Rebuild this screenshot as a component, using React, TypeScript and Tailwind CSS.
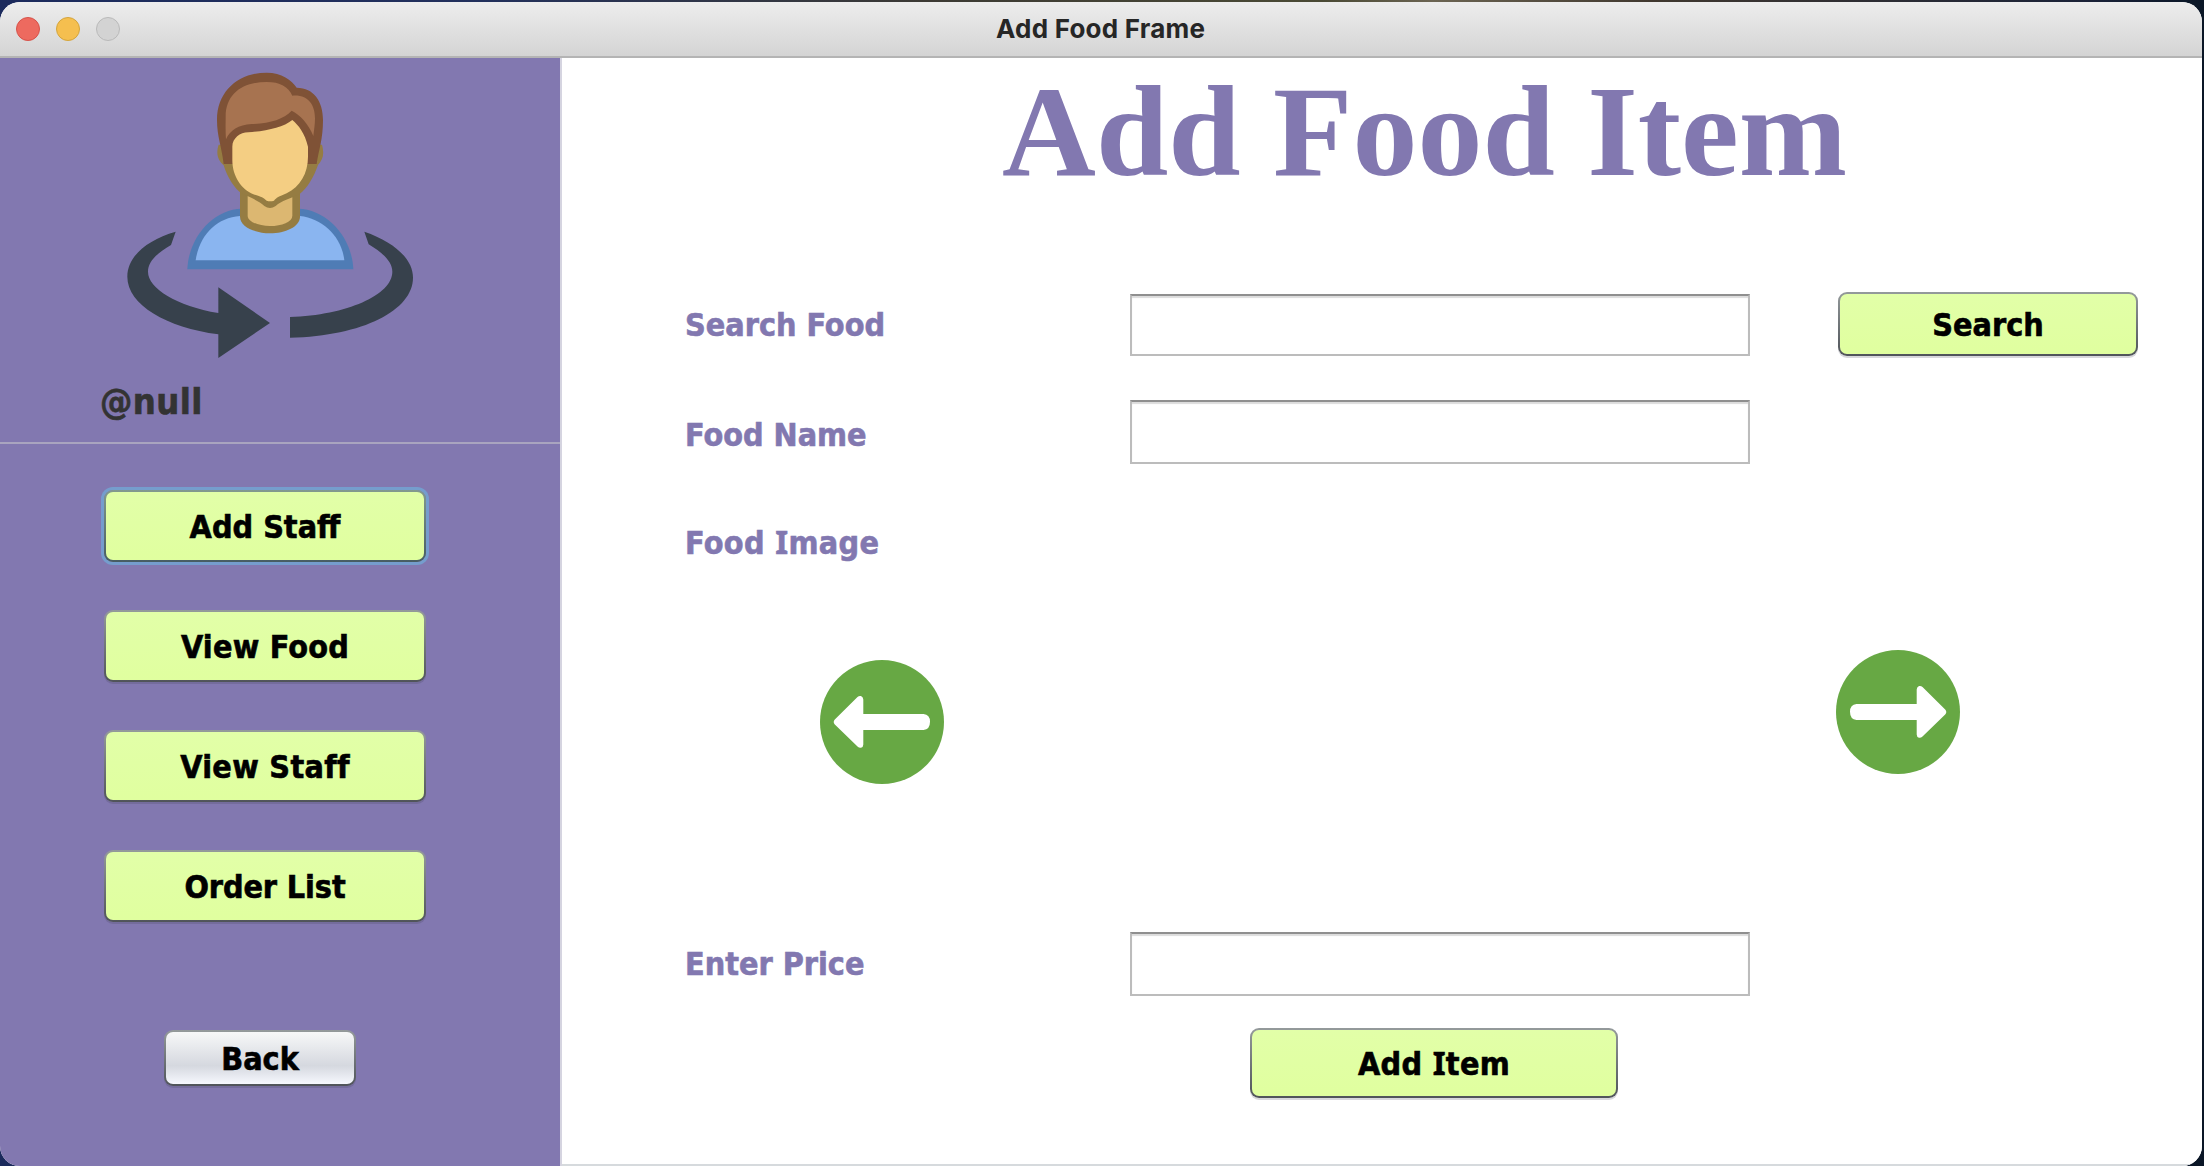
import React from 'react';
import clsx from 'clsx';

const tahoma = "font-['DejaVu_Sans_Condensed','DejaVu_Sans',sans-serif] font-bold [-webkit-text-stroke:0.6px_currentColor]";

function PersonIcon() {
  return (
    <svg viewBox="0 24 1020 966" className="ml-[100px] block h-[322px] w-[340px]" aria-hidden="true">
      <path fill="#37414c" d="M227 545C140 570 82 620 82 680C82 765 200 832 355 853V924L510 819L355 712V789C230 768 144 715 144 665C144 635 170 610 213 585Z" />
      <path fill="#37414c" d="M793 545C880 575 939 625 939 683C939 780 790 858 570 863V801C740 795 877 735 877 665C877 635 850 610 806 583Z" />
      <path fill="#4f7cb5" d="M262 658C266 560 340 478 425 476H595C680 478 756 560 760 658Z" />
      <path fill="#8ab5f0" d="M287 631C298 555 350 503 420 498H600C668 505 725 560 733 631Z" />
      <path fill="#957c42" d="M420 420V500C420 530 465 550 510 550C555 550 600 530 600 500V420Z" />
      <path fill="#dcb771" d="M443 436V497C443 515 475 528 510 528C545 528 577 515 577 497V436Z" />
      <path fill="#957c42" d="M356 284C346 315 356 332 371 346C382 382 402 415 428 433C455 443 480 455 493 468Q510 480 527 468C545 452 570 446 598 433C622 415 642 380 654 345C668 328 674 315 666 284Z" />
      <path fill="#7f5236" d="M371 342C365 290 351 260 351 210C351 120 420 68 500 68C545 68 575 90 590 113C642 113 669 155 669 210C669 270 656 300 650 342Z" />
      <path fill="#a77350" d="M378 268C376 240 377 215 377 200C377 130 430 96 500 96C540 96 565 110 577 137C625 133 645 165 645 205C645 225 642 240 640 258C625 220 600 195 575 182C550 208 510 220 455 222C415 225 390 240 378 268Z" />
      <path fill="#f4ce83" d="M397 290V330C397 380 425 418 460 433C485 440 490 443 500 452Q510 456 522 452C530 443 535 440 560 430C600 410 624 370 624 320V290C615 250 595 225 577 210C550 232 500 243 445 247C420 247 397 265 397 290Z" />
    </svg>
  );
}

function ArrowButton({ className, flip }: { className?: string; flip?: boolean }) {
  return (
    <button className={clsx('h-[124px] w-[124px]', className)} aria-label={flip ? 'Next image' : 'Previous image'}>
      <svg viewBox="0 0 124 124" className={clsx('block h-full w-full', flip && '-scale-x-100')}>
        <circle cx="62" cy="62" r="62" fill="#67a844" />
        <path
          fill="#fff"
          d="M14.8 59.5L37.5 37Q39 35.5 41 36Q43.3 37 43.3 39.5V54H103.5Q110 54.5 110 61.8Q110 69.5 103.5 70H43.3V84.5Q43.3 87 41 87.8Q39 88 37.5 86.5L14.8 64.5Q12.6 62 14.8 59.5Z"
        />
      </svg>
    </button>
  );
}

function PushButton({ children, className, gray, focused }: { children: React.ReactNode; className?: string; gray?: boolean; focused?: boolean }) {
  return (
    <button
      className={clsx(
        'block shrink-0 rounded-[9px] bg-linear-to-b p-[2px]',
        focused
          ? 'from-[#839a8f] to-[#475d63] shadow-[0_0_0_3px_#759dcd]'
          : 'from-[#949a9b] to-[#50545a] shadow-[0_2px_0_rgba(60,60,80,0.2)]',
        className,
      )}
    >
      <span
        className={clsx(
          'flex h-full w-full items-center justify-center rounded-[7px] bg-linear-to-b pt-[2px] text-[32px] leading-none whitespace-pre text-black',
          tahoma,
          gray ? 'from-[#f7f8f8] from-0% via-[#d5d8df] via-65% to-[#f6f8fe]' : 'from-[#e2ffa8] to-[#e0ff9f]',
        )}
      >
        {children}
      </span>
    </button>
  );
}

function Label({ children, className }: { children: React.ReactNode; className?: string }) {
  return (
    <label className={clsx('flex h-[62px] w-[445px] shrink-0 items-center text-[32px] leading-none whitespace-pre text-[#8278b0]', tahoma, className)}>
      {children}
    </label>
  );
}

function Field({ className }: { className?: string }) {
  return (
    <input
      className={clsx(
        'block w-[620px] shrink-0 border-2 border-[#bcbcbc] border-t-[#8f8f8f] bg-white px-2 shadow-[inset_0_2px_1px_#dcdcdc] outline-none',
        className,
      )}
    />
  );
}

/* Capital I with serifs */
function SerifI() {
  return <span className="font-['Noto_Sans',sans-serif] text-[33px] leading-[0]">I</span>;
}

export default function App() {
  return (
    <div className="h-[1166px] w-[2204px] overflow-hidden bg-[linear-gradient(90deg,#1b2a5c_0%,#22305c_22%,#3c3a34_42%,#4a4a35_60%,#6b6452_65%,#40382f_75%,#1a2238_95%,#0a1626_100%)] pt-[2px] pr-[2px]">
      <div className="flex h-[1164px] flex-col overflow-hidden rounded-[20px] bg-white">
        <header className="flex h-[56px] shrink-0 items-center border-b-2 border-[#b4b4b4] bg-linear-to-b from-[#ededed] to-[#d4d4d4] px-4">
          <div className="flex w-[980px] gap-4">
            <span className="h-6 w-6 rounded-full border border-[#d6524a] bg-[#ed6a5f]" />
            <span className="h-6 w-6 rounded-full border border-[#d3a43c] bg-[#f5bf4f]" />
            <span className="h-6 w-6 rounded-full border border-[#b9b9b9] bg-[#d3d3d3]" />
          </div>
          <h2 className="font-['Inter',sans-serif] text-[26px] leading-none font-bold tracking-[0.23px] text-[#262626]">Add Food Frame</h2>
        </header>

        <div className="flex min-h-0 flex-1">
          <aside className="flex w-[562px] shrink-0 flex-col border-r-2 border-[#d5d4e0] bg-[#8278b0]">
            <PersonIcon />
            <p className={clsx('mt-[4px] ml-[100px] h-[36px] text-[36px] leading-[36px] tracking-[0.4px] text-[#333333]', tahoma)}>@null</p>
            <hr className="mt-[22px] border-0 border-t-2 border-[#a9a4bf]" />
            <nav className="mt-[46px] ml-[104px] flex flex-col gap-12">
              <PushButton className="h-[72px] w-[322px]" focused>Add Staff</PushButton>
              <PushButton className="h-[72px] w-[322px]"><span className="tracking-[0.2px]">View Food</span></PushButton>
              <PushButton className="h-[72px] w-[322px]"><span className="tracking-[0.3px]">View Staff</span></PushButton>
              <PushButton className="h-[72px] w-[322px]"><span className="-tracking-[0.1px]">Order List</span></PushButton>
            </nav>
            <PushButton className="mt-[108px] ml-[164px] h-[56px] w-[192px]" gray>Back</PushButton>
          </aside>

          <main className="flex flex-1 flex-col border-b-2 border-[#d6dadd] bg-white pl-[123px]">
            <h1 className="mt-px ml-[317px] font-['Liberation_Serif',serif] text-[130px] leading-[144px] font-bold whitespace-pre text-[#8278b0]">
              Add Food Item
            </h1>
            <div className="mt-[89px] flex h-[64px] items-end">
              <Label>Search Food</Label>
              <Field className="h-[62px]" />
              <PushButton className="ml-[88px] h-[64px] w-[300px]">Search</PushButton>
            </div>
            <div className="mt-[44px] flex h-[64px] items-center">
              <Label className="pt-[6px]">Food Name</Label>
              <Field className="h-[64px]" />
            </div>
            <div className="mt-[47px] flex h-[64px] items-center">
              <Label><span className="tracking-[0.35px]">Food <SerifI />mage</span></Label>
            </div>
            <div className="mt-[75px] flex h-[134px]">
              <ArrowButton className="ml-[135px] self-end" />
              <ArrowButton className="ml-[892px] self-start" flip />
            </div>
            <div className="mt-[148px] flex h-[64px] items-center">
              <Label>Enter Price</Label>
              <Field className="h-[64px]" />
            </div>
            <PushButton className="mt-[32px] ml-[565px] h-[70px] w-[368px]"><span className="tracking-[0.3px]">Add <SerifI />tem</span></PushButton>
          </main>
        </div>
      </div>
    </div>
  );
}
